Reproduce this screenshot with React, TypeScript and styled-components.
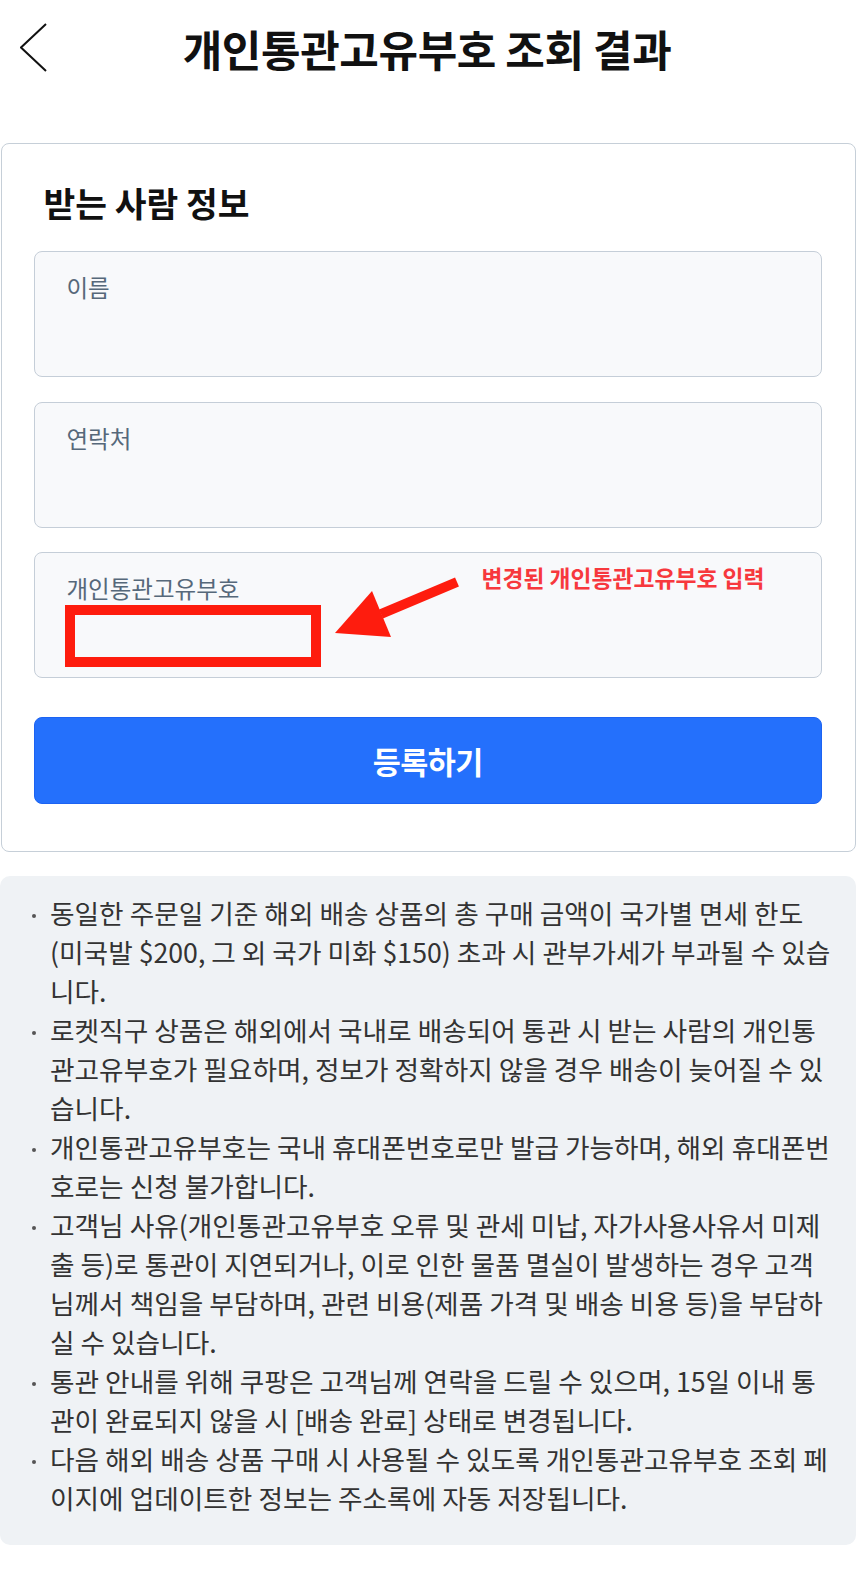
import React from "react";
import styled, { createGlobalStyle } from "styled-components";

const GlobalStyle = createGlobalStyle`
  html, body {
    margin: 0;
    padding: 0;
    background: #ffffff;
  }
  body {
    font-family: "Noto Sans CJK KR", "Noto Sans", sans-serif;
    color: #111;
  }
  * { box-sizing: border-box; }
`;

const Page = styled.div`
  width: 860px;
  display: flex;
  flex-direction: column;
  padding-bottom: 28px;
`;

const Header = styled.header`
  height: 96px;
  display: grid;
  grid-template-columns: 80px 1fr 86px;
  align-items: center;
`;

const BackButton = styled.button`
  border: 0;
  background: none;
  padding: 0 0 0 20px;
  height: 50px;
  display: flex;
  align-items: center;
  cursor: pointer;
`;

const Title = styled.h1`
  margin: 0;
  text-align: center;
  font-size: 43px;
  font-weight: 700;
  line-height: 56px;
  color: #111;
  letter-spacing: -0.4px;
`;

const Card = styled.section`
  margin: 47px 4px 0 1px;
  border: 1.5px solid #c6cfd8;
  border-radius: 8px;
  padding: 38px 33px 47px 31.5px;
  display: flex;
  flex-direction: column;
`;

const CardTitle = styled.h2`
  margin: 0 0 0 10px;
  font-size: 34.5px;
  line-height: 40px;
  font-weight: 700;
  color: #111;
`;

const Fields = styled.div`
  margin-top: 29px;
  display: flex;
  flex-direction: column;
  gap: 24.5px;
`;

const Field = styled.div`
  position: relative;
  height: 126px;
  background: #f8f9fb;
  border: 1.5px solid #c5ced8;
  border-radius: 8px;
  padding: 20px 32px;
`;

const Label = styled.div`
  font-size: 23.5px;
  line-height: 30px;
  color: #56687a;
`;

const Highlight = styled.div`
  position: absolute;
  left: 30px;
  top: 52px;
  width: 256px;
  height: 62px;
  border: 10px solid #fe1c0e;
`;

const ArrowSvg = styled.svg`
  position: absolute;
  left: 0;
  top: 0;
  overflow: visible;
`;

const Note = styled.div`
  position: absolute;
  left: 447px;
  top: 10px;
  font-size: 22.8px;
  line-height: 30px;
  font-weight: 700;
  color: #f7383d;
  white-space: nowrap;
`;

const SubmitButton = styled.button`
  margin-top: 39px;
  height: 87px;
  border: 1px solid #1c63f2;
  border-radius: 8px;
  background: #2470fc;
  color: #fff;
  font-family: "Noto Sans CJK KR", "Noto Sans", sans-serif;
  font-size: 30.5px;
  font-weight: 700;
  letter-spacing: -0.5px;
  cursor: pointer;
`;

const Notice = styled.ul`
  margin: 24px 4px 0 0;
  padding: 17px 23px 28px 26px;
  list-style: none;
  background: #eff2f5;
  border-radius: 10px;
`;

const NoticeItem = styled.li`
  display: grid;
  grid-template-columns: 24px 1fr;
  font-size: 26.7px;
  line-height: 39px;
  color: #333;
`;

const Dot = styled.span`
  height: 39px;
  display: flex;
  align-items: center;
  padding-left: 6px;
  &::before {
    content: "";
    width: 4px;
    height: 4px;
    border-radius: 50%;
    background: #555;
    margin-top: 6px;
  }
`;

const notices = [
  "동일한 주문일 기준 해외 배송 상품의 총 구매 금액이 국가별 면세 한도 (미국발 $200, 그 외 국가 미화 $150) 초과 시 관부가세가 부과될 수 있습니다.",
  "로켓직구 상품은 해외에서 국내로 배송되어 통관 시 받는 사람의 개인통관고유부호가 필요하며, 정보가 정확하지 않을 경우 배송이 늦어질 수 있습니다.",
  "개인통관고유부호는 국내 휴대폰번호로만 발급 가능하며, 해외 휴대폰번호로는 신청 불가합니다.",
  "고객님 사유(개인통관고유부호 오류 및 관세 미납, 자가사용사유서 미제출 등)로 통관이 지연되거나, 이로 인한 물품 멸실이 발생하는 경우 고객님께서 책임을 부담하며, 관련 비용(제품 가격 및 배송 비용 등)을 부담하실 수 있습니다.",
  "통관 안내를 위해 쿠팡은 고객님께 연락을 드릴 수 있으며, 15일 이내 통관이 완료되지 않을 시 [배송 완료] 상태로 변경됩니다.",
  "다음 해외 배송 상품 구매 시 사용될 수 있도록 개인통관고유부호 조회 페이지에 업데이트한 정보는 주소록에 자동 저장됩니다.",
];

export default function App() {
  return (
    <>
      <GlobalStyle />
      <Page>
        <Header>
          <BackButton aria-label="뒤로">
            <svg width="30" height="50" viewBox="0 0 30 50">
              <polyline
                points="26,1 1,24.5 26,48"
                fill="none"
                stroke="#111"
                strokeWidth="2"
              />
            </svg>
          </BackButton>
          <Title>개인통관고유부호 조회 결과</Title>
          <span />
        </Header>

        <Card>
          <CardTitle>받는 사람 정보</CardTitle>
          <Fields>
            <Field>
              <Label>이름</Label>
            </Field>
            <Field>
              <Label>연락처</Label>
            </Field>
            <Field>
              <Label>개인통관고유부호</Label>
              <Highlight />
              <ArrowSvg width="786" height="126" viewBox="0 0 786 126">
                <line
                  x1="422"
                  y1="29"
                  x2="346"
                  y2="61"
                  stroke="#fe1c0e"
                  strokeWidth="10"
                />
                <polygon points="300,80 337,38 356,84" fill="#fe1c0e" />
              </ArrowSvg>
              <Note>변경된 개인통관고유부호 입력</Note>
            </Field>
          </Fields>
          <SubmitButton>등록하기</SubmitButton>
        </Card>

        <Notice>
          {notices.map((t, i) => (
            <NoticeItem key={i}>
              <Dot />
              <span>{t}</span>
            </NoticeItem>
          ))}
        </Notice>
      </Page>
    </>
  );
}
